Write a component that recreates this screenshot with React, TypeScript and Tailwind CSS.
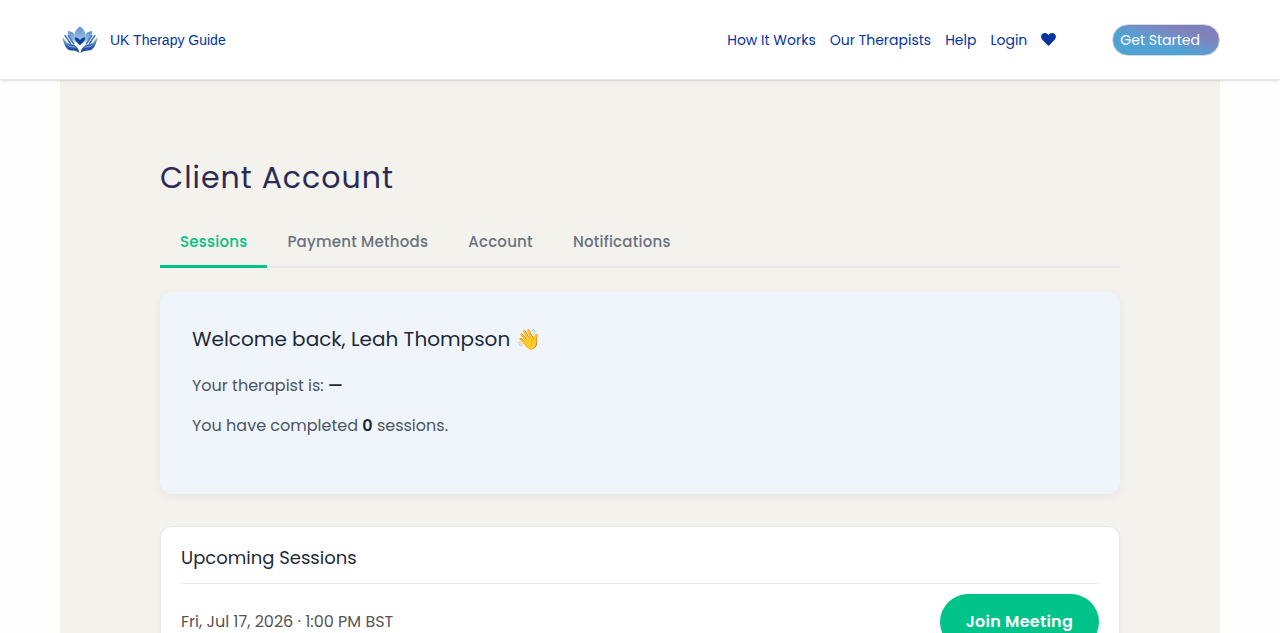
import React, { useState } from 'react';
import { clsx } from 'clsx';

interface Session {
  id: number;
  when: string;
}

const navLinks = [
  { label: 'How It Works', href: '#how-it-works' },
  { label: 'Our Therapists', href: '#therapists' },
  { label: 'Help', href: '#help' },
  { label: 'Login', href: '#login' },
];

const tabs = ['Sessions', 'Payment Methods', 'Account', 'Notifications'];

const sessions: Session[] = [{ id: 1, when: 'Fri, Jul 17, 2026 · 1:00 PM BST' }];

const LotusLogo: React.FC = () => (
  <svg width="36" height="28" viewBox="0 0 34 26" aria-hidden="true">
    <defs>
      <linearGradient id="petal" x1="0" y1="0" x2="0" y2="1">
        <stop offset="0" stopColor="#5f92cd" />
        <stop offset="1" stopColor="#a5c9ea" />
      </linearGradient>
      <linearGradient id="hand" x1="0" y1="0" x2="0" y2="1">
        <stop offset="0" stopColor="#8db6e2" />
        <stop offset="0.5" stopColor="#3768b5" />
        <stop offset="1" stopColor="#0c3b91" />
      </linearGradient>
    </defs>
    <path d="M5.500 4.500c3.500.4 6 2 7.500 4.500l1.500 7-5-3C7 11 5.500 8 5.500 4.500Z" fill="url(#petal)" />
    <path d="M28.500 4.500c-3.500.4-6 2-7.500 4.500l-1.500 7 5-3c2.500-2 4-5 4-8.500Z" fill="url(#petal)" />
    <path d="M17 0c3.500 2.500 5.500 5.500 5.500 8.500 0 2.500-2.500 5-5.500 7-3-2-5.500-4.500-5.500-7C11.500 5.500 13.500 2.500 17 0Z" fill="url(#petal)" stroke="#fff" strokeWidth="0.4" />
    <path d="M12 10.500c2 .2 4 1.200 5 2.700 1-1.500 3-2.500 5-2.700-.2 3-2 5-5 7.500-3-2.500-4.800-4.500-5-7.500Z" fill="#123f99" />
    <path d="M.3 10.500c2.200 1.500 3 3.500 4.500 5l5 1.700c3.200.7 6 3.300 6.700 8.300-2.500-2.500-4.500-2.300-8-2.500-3.500-.3-6-3-8.200-12.500Z" fill="url(#hand)" />
    <path d="M33.700 10.500c-2.200 1.500-3 3.500-4.500 5l-5 1.700c-3.200.7-6 3.300-6.700 8.300 2.500-2.500 4.500-2.300 8-2.500 3.500-.3 6-3 8.200-12.500Z" fill="url(#hand)" />
    <path d="M3 9l5 7M6 9l5 7.500M31 9l-5 7M28 9l-5 7.500" stroke="#3f73bc" strokeWidth="1.500" strokeLinecap="round" />
    <path d="M2 12.500l5 6.500 6 1M32 12.500L27 19l-6 1M4.700 9.500l4.800 7M29.300 9.500l-4.800 7" fill="none" stroke="#cfe1f4" strokeWidth="0.500" />
  </svg>
);

const HeartIcon: React.FC = () => (
  <svg width="15" height="13" viewBox="0 0 15 13" fill="currentColor" aria-hidden="true">
    <path d="M7.500 13 1.300 6.800C-.3 5.100-.3 2.500 1.200 1.100 2.800-.4 5.300-.3 6.800 1.300l.7.700.7-.7C9.700-.3 12.200-.4 13.800 1.100c1.500 1.400 1.500 4-.1 5.700L7.500 13Z" />
  </svg>
);

const Header: React.FC = () => (
  <header className="relative z-10 bg-white border-b border-gray-200 shadow-sm">
    <div className="max-w-[1160px] h-[79px] mx-auto flex items-center justify-between">
      <a
        href="#home"
        className="flex items-center gap-3 px-0.5 font-['Liberation_Sans',Arial,sans-serif] text-sm text-[#0435a0]"
      >
        <LotusLogo />
        UK Therapy Guide
      </a>
      <div className="flex items-center gap-14">
        <nav className="flex items-center gap-3.5 text-sm text-[#0435a0]">
          {navLinks.map(link => (
            <a key={link.label} href={link.href}>{link.label}</a>
          ))}
          <a href="#favourites" aria-label="Favourites"><HeartIcon /></a>
        </nav>
        <a
          href="#get-started"
          className="flex items-center h-8 pl-[7px] pr-[19px] rounded-full border border-[#d5dbe2] bg-linear-to-tr from-[#50a1d4] from-40% to-[#8081bc] to-75% text-sm text-white"
        >
          Get Started
        </a>
      </div>
    </div>
  </header>
);

const WelcomeCard: React.FC = () => (
  <section className="mt-6 p-8 pb-12 rounded-xl bg-[#f0f5fc] shadow-[0_2px_8px_rgba(0,0,0,0.06)]">
    <h2 className="text-xl leading-[30px] text-gray-800">Welcome back, Leah Thompson 👋</h2>
    <p className="mt-5 text-base text-gray-600">
      Your therapist is: <strong className="font-semibold text-gray-800">—</strong>
    </p>
    <p className="mt-4 mb-2 text-base text-gray-600">
      You have completed <strong className="font-semibold text-gray-800">0</strong> sessions.
    </p>
  </section>
);

const UpcomingSessions: React.FC = () => (
  <section className="mt-8 p-5 pt-[17px] rounded-xl border border-gray-200 bg-white shadow-[0_2px_4px_rgba(0,0,0,0.04)]">
    <h2 className="pb-[11px] border-b border-gray-200 text-lg text-gray-800">Upcoming Sessions</h2>
    <ul>
      {sessions.map(session => (
        <li key={session.id} className="flex items-center justify-between py-2.5">
          <span className="text-base text-[#555555]">{session.when}</span>
          <button className="px-[26px] py-4 rounded-full bg-[#00c389] text-base font-semibold tracking-[0.015em] text-white">
            Join Meeting
          </button>
        </li>
      ))}
    </ul>
  </section>
);

export default function App() {
  const [activeTab, setActiveTab] = useState('Sessions');

  return (
    <div className="min-h-screen bg-[#fefefe] font-[Poppins,Inter,sans-serif]">
      <Header />
      <main className="max-w-[1160px] mx-auto px-6 pt-[76px] pb-20 bg-[#f3f2ec]">
        <div className="max-w-[960px] mx-auto">
          <h1 className="text-3xl leading-[44px] tracking-[1px] text-[#2d2a55]">Client Account</h1>
          <div role="tablist" className="mt-4 flex border-b-2 border-gray-200">
            {tabs.map(tab => (
              <button
                key={tab}
                role="tab"
                aria-selected={activeTab === tab}
                onClick={() => setActiveTab(tab)}
                className={clsx(
                  'px-5 pt-3.5 pb-[11px] -mb-0.5 border-b-3 text-[15px] leading-[24px] font-medium tracking-[0.015em]',
                  activeTab === tab ? 'border-[#00c389] text-[#00c389]' : 'border-transparent text-gray-500'
                )}
              >
                {tab}
              </button>
            ))}
          </div>
          {activeTab === 'Sessions' && (
            <>
              <WelcomeCard />
              <UpcomingSessions />
            </>
          )}
        </div>
      </main>
    </div>
  );
}
